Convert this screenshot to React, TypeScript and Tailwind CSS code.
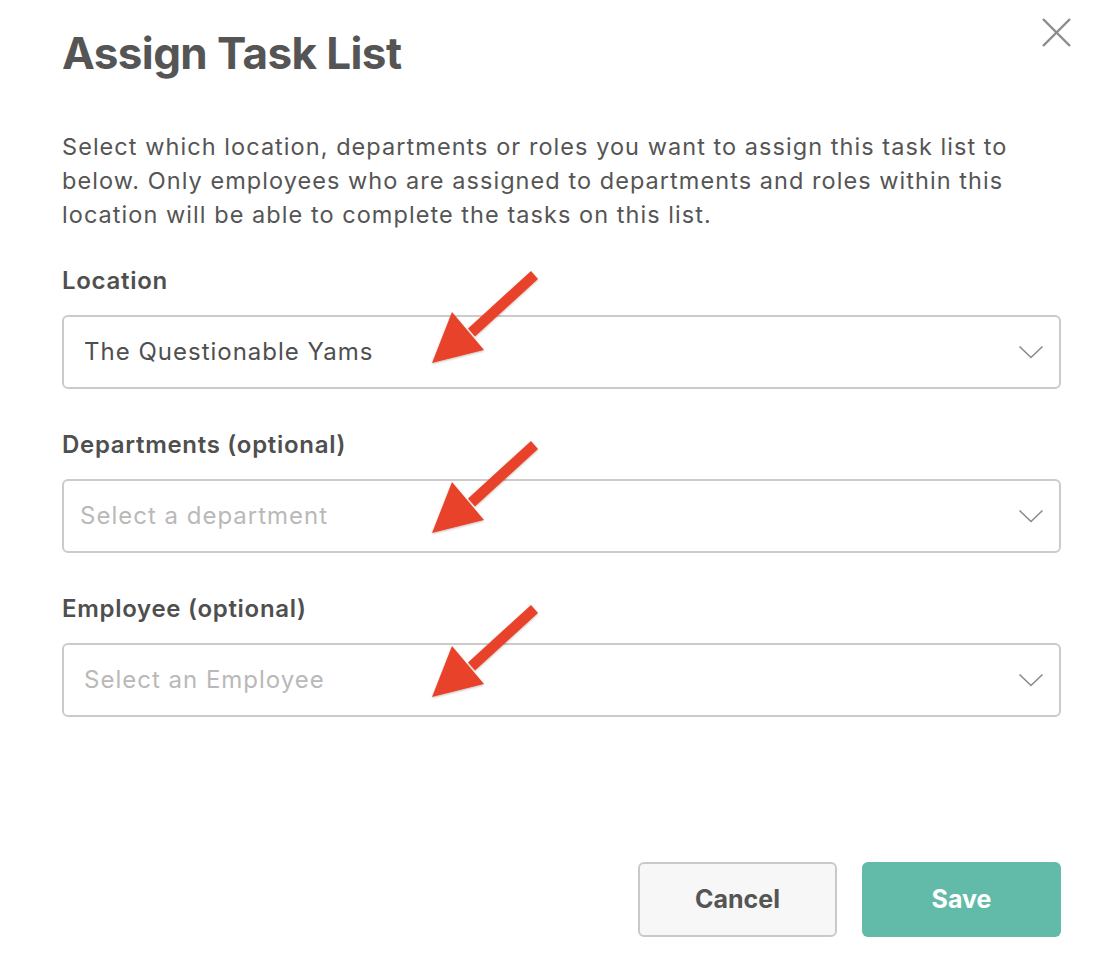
import React from "react";

const font = { fontFamily: "Inter, 'Open Sans', sans-serif" };

function Chevron() {
  return (
    <svg width="26" height="14" viewBox="0 0 26 14" className="shrink-0">
      <polyline points="1.5,1.5 13,12.5 24.5,1.5" fill="none" stroke="#8a8a8a" strokeWidth="1.6" />
    </svg>
  );
}

function Arrow({ top }: { top: number }) {
  return (
    <svg
      className="absolute pointer-events-none"
      style={{ left: 420, top }}
      width="130"
      height="110"
      viewBox="0 0 130 110"
    >
      <defs>
        <filter id={`sh${top}`} x="-20%" y="-20%" width="140%" height="140%">
          <feDropShadow dx="0" dy="1" stdDeviation="1.2" floodColor="#000" floodOpacity="0.25" />
        </filter>
      </defs>
      <g filter={`url(#sh${top})`} fill="#e8432a">
        <polygon points="111,8 118,16 55,73.5 48,65.5" />
        <polygon points="12,100 32,49 64,87" />
      </g>
    </svg>
  );
}

function Field({ label, value, placeholder, padX }: { label: string; value: string; placeholder?: boolean; padX: string }) {
  return (
    <div className="flex flex-col">
      <div className="text-[24px] leading-[34px] font-semibold text-[#4f4f4f] tracking-[0.7px]">{label}</div>
      <div
        className={`mt-[17px] h-[74px] rounded-[6px] border-2 border-[#cbcbcb] bg-white flex items-center justify-between ${padX} pr-[15px]`}
      >
        <span className={`text-[24px] tracking-[1px] ${placeholder ? "text-[#b9b9b9]" : "text-[#4f4f4f]"}`}>{value}</span>
        <Chevron />
      </div>
    </div>
  );
}

export default function App() {
  return (
    <div className="relative w-[1118px] h-[959px] bg-white overflow-hidden" style={font}>
      <button className="absolute left-[1040px] top-[16px] w-[33px] h-[33px] flex items-center justify-center">
        <svg width="33" height="33" viewBox="0 0 33 33">
          <line x1="3" y1="3" x2="30" y2="30" stroke="#8c8c8c" strokeWidth="2.4" />
          <line x1="30" y1="3" x2="3" y2="30" stroke="#8c8c8c" strokeWidth="2.4" />
        </svg>
      </button>
      <div className="flex flex-col pl-[62px] pr-[57px]">
        <h1 className="mt-[27px] text-[44px] leading-[52px] font-bold text-[#555555] tracking-[-0.6px]">
          Assign Task List
        </h1>
        <p className="mt-[51px] text-[23.5px] leading-[34px] text-[#555555] tracking-[1.05px]">
          Select which location, departments or roles you want to assign this task list to below. Only employees who
          are assigned to departments and roles within this location will be able to complete the tasks on this list.
        </p>
        <div className="mt-[32px] flex flex-col gap-[39px]">
          <Field label="Location" value="The Questionable Yams" padX="pl-[20px]" />
          <Field label="Departments (optional)" value="Select a department" placeholder padX="pl-[16px]" />
          <Field label="Employee (optional)" value="Select an Employee" placeholder padX="pl-[20px]" />
        </div>
        <div className="mt-[145px] flex justify-end gap-[25px]">
          <button className="w-[199px] h-[75px] rounded-[6px] border-2 border-[#c9c9c9] bg-[#f7f7f7] text-[25px] font-bold text-[#555555]">
            Cancel
          </button>
          <button className="w-[199px] h-[75px] rounded-[6px] bg-[#62bba8] text-[25px] font-bold text-white">
            Save
          </button>
        </div>
      </div>
      <Arrow top={263} />
      <Arrow top={433} />
      <Arrow top={597} />
    </div>
  );
}
